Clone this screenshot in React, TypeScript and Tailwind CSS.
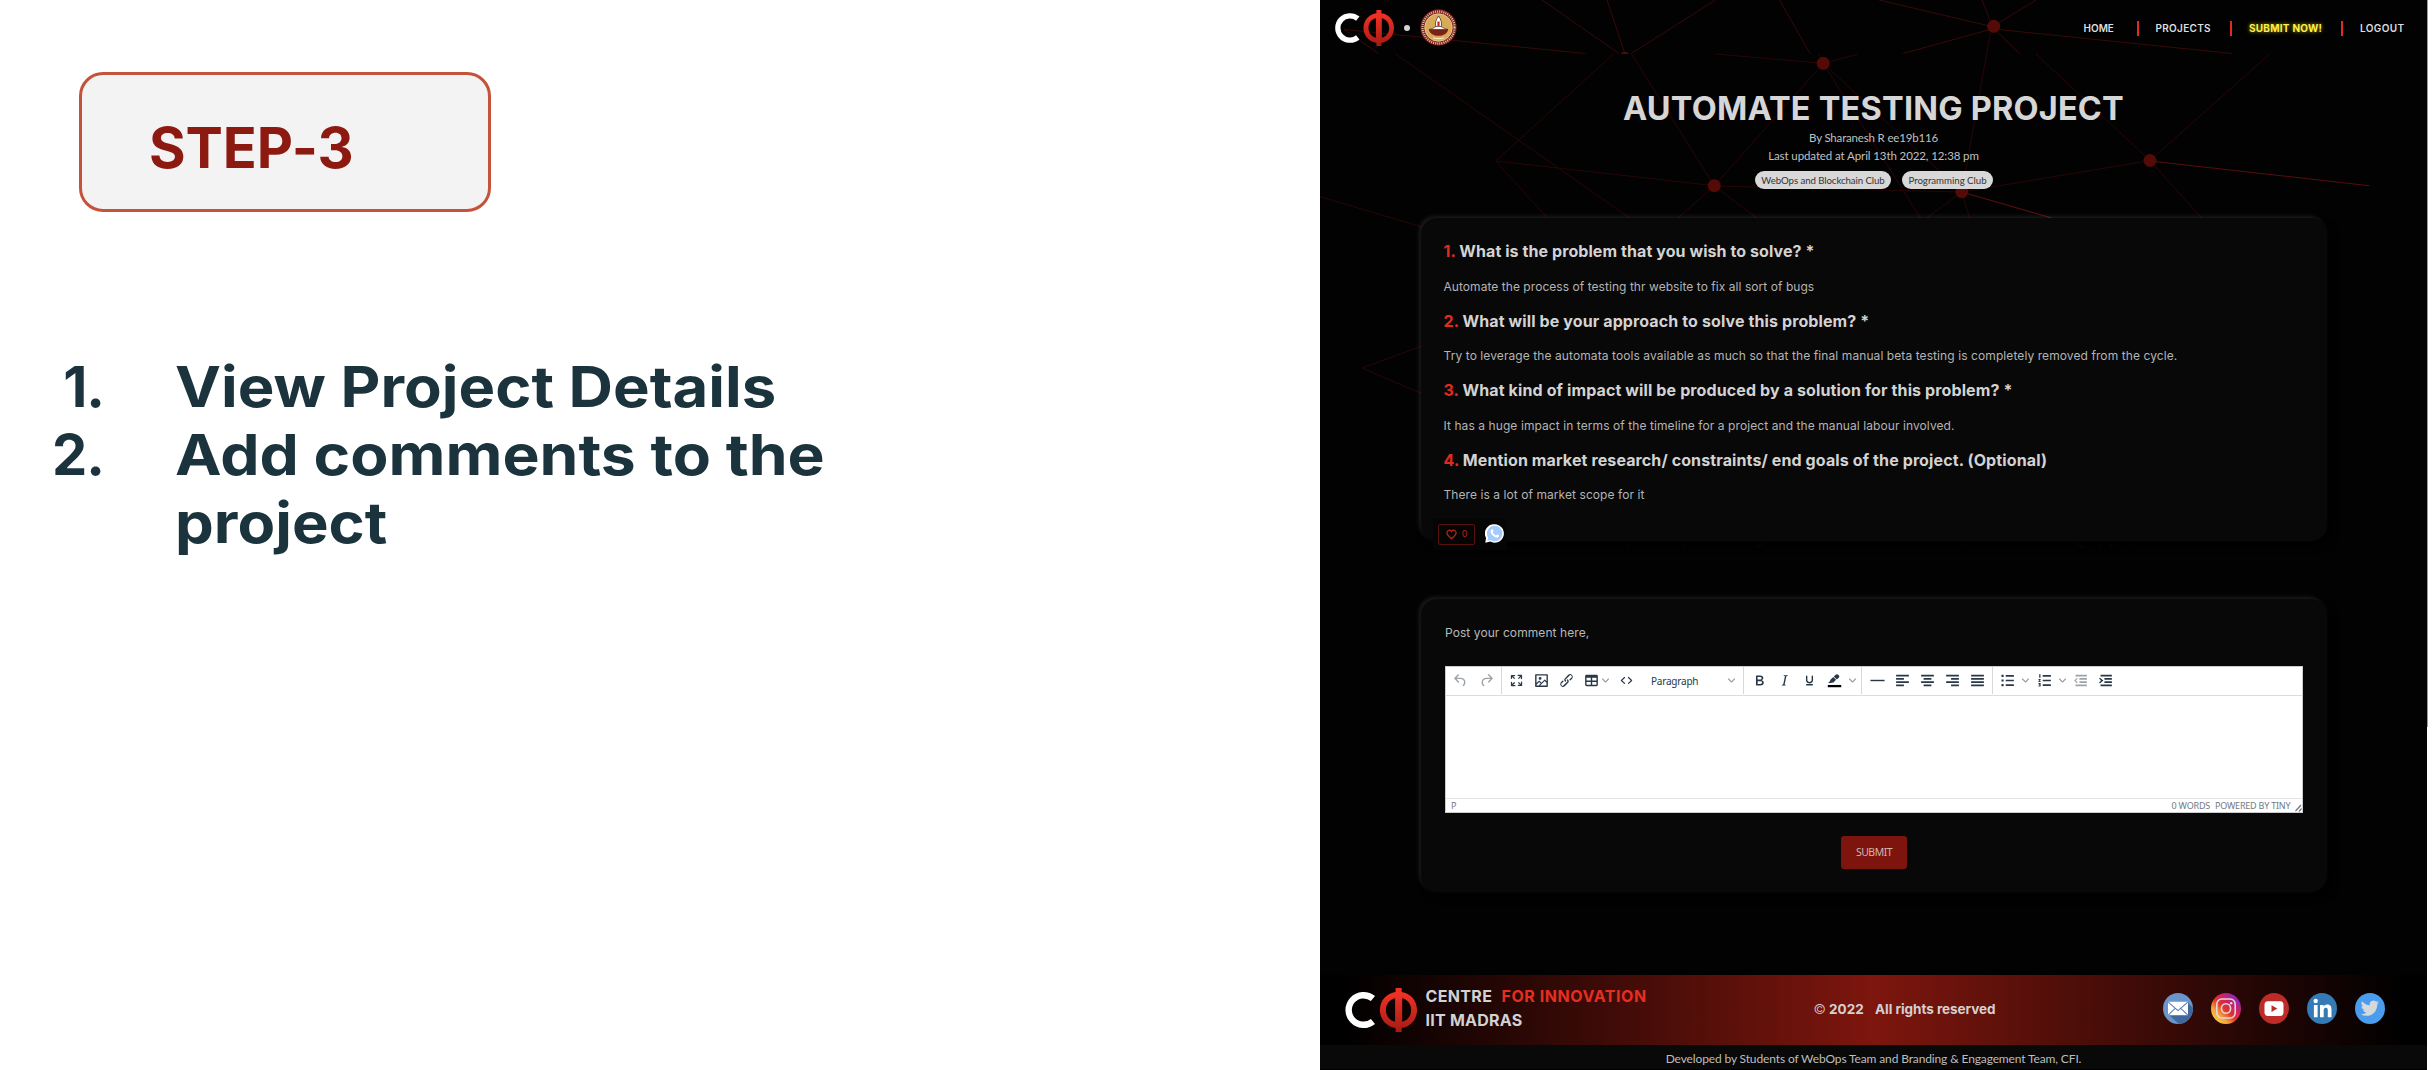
import type { ReactNode } from "react";

/* ---------- logos ---------- */

function CfiLogo({ className, id }: { className: string; id: string }) {
  return (
    <svg className={className} viewBox="0 0 60 36" fill="none">
      <defs>
        <linearGradient id={id} x1="0" y1="0" x2="0" y2="1">
          <stop offset="0.15" stopColor="#ee3124" />
          <stop offset="1" stopColor="#a51a14" />
        </linearGradient>
      </defs>
      <path d="M23.8 8.6A12.2 12.2 0 1 0 23.8 27.4" stroke="#fff" strokeWidth="5.3" />
      <path
        fill={`url(#${id})`}
        fillRule="evenodd"
        d="M42.4 0h5v3.2C54.500 4.200 60 10 60 18s-5.500 13.800-12.600 14.800V36h-5v-3.200C35.300 31.800 29.500 26 29.500 18S35.300 4.200 42.400 3.200zM42 8.300C37.500 9.300 34.500 13 34.500 18s3 8.700 7.500 9.700zM47.800 8.300v19.400C52.200 26.700 55.200 23 55.200 18s-3-8.700-7.400-9.700z"
      />
    </svg>
  );
}

function Seal() {
  return (
    <svg className="h-[37px] w-[37px]" viewBox="0 0 37 37">
      <circle cx="18.500" cy="18.500" r="18.200" fill="#7d1c18" />
      <circle cx="18.500" cy="18.500" r="16" fill="none" stroke="#d9b9a6" strokeWidth="2.300" strokeDasharray="1.100 1" />
      <circle cx="18.500" cy="18.500" r="13.800" fill="#d9ab58" stroke="#f1dcae" strokeWidth="0.700" />
      <path d="M18.500 7c2.600 3.600 3.700 7 2.700 11h-5.400c-1-4 .1-7.400 2.700-11z" fill="#fff" stroke="#3a1a12" strokeWidth="0.700" />
      <path d="M17.400 12.500h2.200v4.500h-2.200z" fill="#c3281c" />
      <path d="M9 20.500c3-.8 5.500-1.800 7-3h5c1.500 1.200 4 2.200 7 3z" fill="#fff" stroke="#3a1a12" strokeWidth="0.600" />
      <path d="M8.800 20.500h19.400c-1 4-4.500 6.300-9.700 6.300s-8.700-2.300-9.700-6.300z" fill="#7a211a" />
      <path d="M13 28.800c3 1.200 8 1.200 11 0" stroke="#fff3d8" strokeWidth="1" fill="none" />
    </svg>
  );
}

/* ---------- particle network behind the page ---------- */

const headerLines = [
  [222, 0, 299, 53.5], [287, 0, 304.300, 52], [395.400, 0, 311.400, 53.5], [459.600, 0, 490, 53.5],
  [24, 29.5, 265, 53.5], [24, 29.5, 58.600, 53.5], [559, 0, 673.700, 27], [662, 0, 671, 23],
  [716, 0, 673.700, 26], [673.700, 28.5, 583, 53.5], [673.700, 28.5, 699.500, 53.5], [673.700, 29, 912, 53.5],
];
const bodyLines = [
  [75.700, 54, 309.600, 218], [293.600, 54, 175.700, 161], [175.700, 161, 227.500, 218],
  [175.700, 161, 394.300, 185.700], [311.400, 54, 394.300, 185.700], [395.400, 54, 503.200, 63.300],
  [503.200, 63.300, 394.300, 185.700], [503.200, 63.300, 537.500, 54.300], [498.500, 54, 503.200, 63.300],
  [503.200, 63.300, 600.500, 218], [503.200, 63.300, 641.800, 192], [0, 196.700, 102, 227],
  [394.300, 185.700, 358, 218], [394.300, 185.700, 436.400, 218], [394.300, 186, 641.800, 192],
  [671, 30, 641.800, 192], [716, 54, 830, 160.500], [949.600, 54, 830, 160.500], [830, 160.500, 641.800, 192],
  [830, 160.500, 881.500, 218], [641.800, 192, 606.500, 218], [641.800, 192, 649.500, 218],
  [102, 346, 42, 368], [42, 368, 102, 393.700],
  [183, 543, 186, 547], [303, 543, 310, 547], [365, 543, 365, 547], [436, 547, 446, 543],
  [642, 543, 643, 547], [752, 543, 764, 547], [776, 543, 781, 547], [791, 543, 792, 547], [809, 547, 812, 543],
];
const brightLines = [
  [830, 161, 1049.300, 185.700], [641.800, 192, 732, 218],
];
const nodes = [[394.300, 185.700], [503.200, 63.300], [673.700, 26.300], [830, 160.500], [641.800, 191.700]];

function Network() {
  return (
    <svg className="absolute inset-0 h-full w-full" viewBox="0 0 1107 1070" fill="none">
      <g stroke="#350a07" strokeWidth="1">
        {headerLines.map((l, i) => (
          <line key={i} x1={l[0]} y1={l[1]} x2={l[2]} y2={l[3]} />
        ))}
      </g>
      <g stroke="#280605" strokeWidth="1">
        {bodyLines.map((l, i) => (
          <line key={i} x1={l[0]} y1={l[1]} x2={l[2]} y2={l[3]} />
        ))}
      </g>
      <g stroke="#560f0b" strokeWidth="1.100">
        {brightLines.map((l, i) => (
          <line key={i} x1={l[0]} y1={l[1]} x2={l[2]} y2={l[3]} />
        ))}
      </g>
      <path d="M300.500 53.800a4.800 3.200 0 0 1 8.500 0z" fill="#6a0f0a" />
      {nodes.map((n, i) => (
        <circle key={i} cx={n[0]} cy={n[1]} r="6.500" fill="#540b07" />
      ))}
    </svg>
  );
}

/* ---------- editor toolbar icons ---------- */

const icons = {
  undo: "M6.4 8H12c3.700 0 6.200 2 6.800 5.100.6 2.700-.4 5.600-2.300 6.800a1 1 0 0 1-1-1.800c1.100-.6 1.800-2.700 1.400-4.600-.5-2.100-2.100-3.500-4.900-3.500H6.400l3.300 3.300a1 1 0 1 1-1.400 1.400l-5-5a1 1 0 0 1 0-1.400l5-5a1 1 0 0 1 1.400 1.400L6.400 8z",
  redo: "M17.600 10H12c-2.800 0-4.400 1.400-4.900 3.500-.4 2 .3 4 1.400 4.600a1 1 0 1 1-1 1.800c-2-1.200-2.900-4.100-2.300-6.800.6-3 3-5.100 6.800-5.100h5.600l-3.300-3.300a1 1 0 1 1 1.400-1.400l5 5a1 1 0 0 1 0 1.400l-5 5a1 1 0 0 1-1.400-1.400l3.300-3.300z",
  fullscreen:
    "M15.300 10l-1.200-1.300 2.900-3h-2.300a.9.9 0 1 1 0-1.700H19c.5 0 .9.4.9.9v4.400a.9.9 0 1 1-1.800 0V7l-2.900 3zm0 4l3 3v-2.300a.9.9 0 1 1 1.700 0V19c0 .5-.4.9-.9.9h-4.400a.9.9 0 1 1 0-1.800H17l-3-2.900 1.300-1.200zM10 15.400l-2.900 3h2.300a.9.9 0 1 1 0 1.700H5a.9.9 0 0 1-.9-.9v-4.400a.9.9 0 1 1 1.800 0V17l2.900-3 1.200 1.300zM8.700 10L5.700 7v2.300a.9.9 0 0 1-1.700 0V5c0-.5.4-.9.9-.9h4.400a.9.9 0 0 1 0 1.800H7l3 2.900-1.300 1.200z",
  image:
    "M5 15.700l3.300-3.200c.3-.3.7-.3 1 0L12 15l4.100-4c.3-.4.8-.4 1 0l2 1.900V5H5v10.700zM5 18v1h3l2.800-2.900-2-2L5 17.900zm14-3l-2.500-2.400-6.400 6.400H19v-4zM4 3h16c.6 0 1 .4 1 1v16c0 .6-.4 1-1 1H4a1 1 0 0 1-1-1V4c0-.6.4-1 1-1zm6 8a2 2 0 1 0 0-4 2 2 0 0 0 0 4z",
  link: "M6.200 12.300a1 1 0 0 1 1.400 1.400l-2.100 2a2 2 0 1 0 2.700 2.800l4.800-4.800a1 1 0 0 0 0-1.400 1 1 0 1 1 1.400-1.300 2.900 2.900 0 0 1 0 4L9.600 20a3.900 3.900 0 0 1-5.500-5.500l2-2zm11.600-.6a1 1 0 0 1-1.400-1.400l2-2a2 2 0 1 0-2.600-2.800L11 10.300a1 1 0 0 0 0 1.400A1 1 0 1 1 9.600 13a2.900 2.900 0 0 1 0-4L14.400 4a3.900 3.900 0 0 1 5.500 5.500l-2 2z",
  table: "M19 4a2 2 0 0 1 2 2v12a2 2 0 0 1-2 2H5a2 2 0 0 1-2-2V6c0-1.100.9-2 2-2h14zM5 14v4h6v-4H5zm14 0h-6v4h6v-4zm0-6h-6v4h6V8zM5 12h6V8H5v4z",
  code: "M9.800 15.700c.3.3.3.8 0 1-.3.4-.9.4-1.200 0l-4.400-4.100a.8.8 0 0 1 0-1.200l4.400-4.200c.3-.3.9-.3 1.200 0 .3.3.3.8 0 1.100L6 12l3.800 3.700zM14.200 15.700c-.3.3-.3.8 0 1 .4.4.9.4 1.200 0l4.400-4.100c.3-.3.3-.9 0-1.200l-4.400-4.200a.8.8 0 0 0-1.200 0c-.3.3-.3.8 0 1.100L18 12l-3.800 3.700z",
  bold: "M7.800 19c-.3 0-.5 0-.6-.2l-.2-.5V5.700c0-.2 0-.4.2-.5l.6-.2h5c1.500 0 2.700.3 3.500 1 .7.6 1.100 1.400 1.100 2.500a3 3 0 0 1-.6 1.900c-.4.6-1 1-1.600 1.200.4.1.9.3 1.300.6s.8.7 1 1.200c.4.4.5 1 .5 1.600 0 1.300-.4 2.300-1.300 3-.8.7-2.100 1-3.800 1H7.800zm5-8.300c.6 0 1.200-.1 1.600-.5.4-.3.6-.7.6-1.300 0-1.100-.8-1.700-2.300-1.700H9.300v3.500h3.400zm.5 6c.7 0 1.300-.1 1.700-.4.4-.4.6-.9.6-1.500s-.2-1-.7-1.400c-.4-.3-1-.4-2-.4H9.400v3.800h4z",
  italic: "M16.700 4.700l-.1.9h-.3c-.6 0-1 0-1.400.3-.3.3-.4.6-.5 1.100l-2.100 9.800v.6c0 .5.4.8 1.400.8h.2l-.2.8H8l.2-.8h.2c1.100 0 1.800-.5 2-1.500l2-9.800.1-.5c0-.6-.4-.8-1.400-.8h-.3l.2-.9h5.800z",
  underline: "M16 5c.6 0 1 .4 1 1v5.500a4 4 0 0 1-.4 1.800l-1 1.400a5.300 5.300 0 0 1-5.500 1 5 5 0 0 1-1.600-1c-.5-.4-.8-.9-1.100-1.400a4 4 0 0 1-.4-1.800V6c0-.6.4-1 1-1s1 .4 1 1v5.500c0 .3 0 .6.2 1l.6.7a3.300 3.300 0 0 0 2.200.8 3.400 3.400 0 0 0 2.200-.8c.3-.2.4-.5.6-.8l.2-.9V6c0-.6.4-1 1-1zM8 17h8c.6 0 1 .4 1 1s-.4 1-1 1H8a1 1 0 0 1 0-2z",
  pen: "M7.700 15.700H3l3.300-3.300-.7-.8L10.200 7l4 4.100-4 4.200c-.2.200-.6.200-.8 0l-.6-.7-1.100 1.100zM11 6.400l3.200-2.700a2 2 0 0 1 2.600 0L18.300 5c.7.700.7 2 0 2.700L15.300 10.700z",
  hr: "M2 11h20v2H2z",
  left: "M3 4h18v2.400H3zm0 4.600h11V11H3zm0 4.600h18v2.400H3zm0 4.600h11v2.400H3z",
  center: "M3 4h18v2.400H3zm3.500 4.600h11V11h-11zM3 13.200h18v2.400H3zm3.500 4.600h11v2.400h-11z",
  right: "M3 4h18v2.400H3zm7 4.600h11V11H10zM3 13.200h18v2.400H3zm7 4.600h11v2.400H10z",
  justify: "M3 4h18v2.400H3zm0 4.600h18V11H3zm0 4.600h18v2.400H3zm0 4.600h18v2.400H3z",
  bullets: "M9.500 4.300H21v2.400H9.500zm0 6.500H21v2.400H9.500zm0 6.500H21v2.400H9.500zM3.500 4h3v3h-3zm0 6.500h3v3h-3zm0 6.500h3v3h-3z",
  numbers: "M9.500 4.300H21v2.400H9.500zm0 6.500H21v2.400H9.500zm0 6.500H21v2.400H9.500zM4.500 3h1.800v5H4.500zM3.500 10h3v1.300l-1.500 1.500h1.500V14h-3v-1.300L5 11.200H3.500zm0 5.700h3v4.600h-3v-1.200H5v-.7H4v-1h1v-.6H3.500z",
  outdent: "M5 4h16v2.400H5zm5.500 4.600H21V11H10.500zm0 4.600H21v2.400H10.500zM5 17.800h16v2.400H5zM7 8.300l1.100 1.100L5.400 12.100l2.700 2.700L7 16 3 12.100z",
  indent: "M5 4h16v2.400H5zm5.500 4.600H21V11H10.500zm0 4.600H21v2.400H10.500zM5 17.800h16v2.400H5zM4 8L3 9.100l2.500 3L3 15.100 4 16.200l5-4.100z",
};

function Ico({ name, dim }: { name: keyof typeof icons; dim?: boolean }) {
  return (
    <svg className={dim ? "h-[17px] w-[17px] shrink-0 text-[#9da2a9]" : "h-[17px] w-[17px] shrink-0 text-[#2a3747]"} viewBox="0 0 24 24" fill="currentColor" fillRule="evenodd">
      <path d={icons[name]} />
      {name === "pen" && <path d="M2.500 18.300h19v3.200h-19z" fill="#000" />}
    </svg>
  );
}

function Chevron() {
  return (
    <svg className="h-[7px] w-[7px] shrink-0 text-[#969ba3]" viewBox="0 0 10 10" fill="currentColor">
      <path d="M8.700 2.200c.3-.3.8-.3 1 0 .4.4.4.9 0 1.200L5.700 7.800c-.3.3-.9.3-1.200 0L.2 3.400a.8.8 0 0 1 0-1.200c.3-.3.8-.3 1.100 0L5 6l3.700-3.800z" />
    </svg>
  );
}

function Toolbar() {
  return (
    <div className="flex h-[29px] items-stretch border-b border-[#dcdcdc] pb-px">
      <div className="flex w-[56px] items-center gap-[9px] border-r border-[#d8d8d8] pl-[6px]">
        <Ico name="undo" dim />
        <Ico name="redo" dim />
      </div>
      <div className="flex w-[242px] items-center border-r border-[#d8d8d8] pl-[6px]">
        <Ico name="fullscreen" />
        <span className="w-[8px]" />
        <Ico name="image" />
        <span className="w-[8px]" />
        <Ico name="link" />
        <span className="w-[8px]" />
        <Ico name="table" />
        <span className="w-[2px]" />
        <Chevron />
        <span className="w-[9px]" />
        <Ico name="code" />
        <span className="ml-[16px] w-[48px] whitespace-nowrap text-[10px] leading-[14px] tracking-[-0.21px] text-[#2a3747]">Paragraph</span>
        <span className="w-[29px]" />
        <Chevron />
      </div>
      <div className="flex w-[118px] items-center border-r border-[#d8d8d8] pl-[7px]">
        <Ico name="bold" />
        <span className="w-[8px]" />
        <Ico name="italic" />
        <span className="w-[8px]" />
        <Ico name="underline" />
        <span className="w-[7.500px]" />
        <Ico name="pen" />
        <span className="w-[6px]" />
        <Chevron />
      </div>
      <div className="flex w-[130.500px] items-center gap-[8px] border-r border-[#d8d8d8] pl-[6.500px]">
        <Ico name="hr" />
        <Ico name="left" />
        <Ico name="center" />
        <Ico name="right" />
        <Ico name="justify" />
      </div>
      <div className="flex items-center pl-[6.500px]">
        <Ico name="bullets" />
        <span className="w-[6px]" />
        <Chevron />
        <span className="w-[6.500px]" />
        <Ico name="numbers" />
        <span className="w-[6px]" />
        <Chevron />
        <span className="w-[6.500px]" />
        <Ico name="outdent" dim />
        <span className="w-[8px]" />
        <Ico name="indent" />
      </div>
    </div>
  );
}

/* ---------- page parts ---------- */

const NavBar = () => (
  <span className="h-[15px] w-[2px] bg-[#e32b1f]" />
);

function Header() {
  return (
    <header className="flex h-[54px] items-start">
      <CfiLogo id="phi-top" className="ml-[14px] mt-[10px] h-[36px] w-[60px]" />
      <span className="ml-[10px] mt-[25px] h-[6px] w-[6px] rounded-full bg-[#d4d4d4]" />
      <span className="ml-[10px] mt-[9px]">
        <Seal />
      </span>
      <nav className="ml-auto mt-[20px] flex h-[16px] items-center pr-[22px] font-['Inter',sans-serif] text-[10px] font-semibold leading-[16px] text-[#dedede]">
        <span className="w-[53px]">HOME</span>
        <NavBar />
        <span className="ml-[17px] w-[74.500px] tracking-[0.3px]">PROJECTS</span>
        <NavBar />
        <span className="ml-[17px] w-[92px] whitespace-nowrap font-bold tracking-[0.25px] text-[#fdf04a] [text-shadow:0_0_4px_#b8a800]">SUBMIT NOW!</span>
        <NavBar />
        <span className="ml-[17px] w-[45px] tracking-[0.4px]">LOGOUT</span>
      </nav>
    </header>
  );
}

function Question({ n, title, body, tt, bt }: { n: string; title: string; body: string; tt: string; bt: string }) {
  return (
    <div className="h-[69.67px] whitespace-nowrap font-['Inter',sans-serif]">
      <h2 className={"text-[16px] font-bold leading-6 text-[#d3d3d3] " + tt}>
        <span className="text-[#e02c20]">{n}</span> {title}
      </h2>
      <p className={"mt-[13.500px] text-[12px] leading-5 text-[#b4b4b4] " + bt}>{body}</p>
    </div>
  );
}

function Card({ className, children }: { className: string; children: ReactNode }) {
  return (
    <section
      className={
        "ml-[101px] w-[906px] rounded-[16px] bg-[#080808] shadow-[-2px_-2px_4px_rgba(255,255,255,0.11),5px_5px_7px_#000] " + className
      }
    >
      {children}
    </section>
  );
}

function Socials() {
  return (
    <div className="flex gap-[18px]">
      <svg className="h-[31px] w-[30px]" viewBox="0 0 30 30" preserveAspectRatio="none">
        <circle cx="15" cy="15" r="15" fill="#6b96cc" />
        <path d="M25 9.500l4.800 5A15 15 0 0 1 16 30L5.500 21z" fill="#3f689f" />
        <path d="M5 8.500h20v13H5z" fill="#fff" />
        <path d="M5.200 8.800L15 17l9.800-8.200M5.200 21.300l7-6.500M24.800 21.300l-7-6.500" stroke="#5279b4" strokeWidth="1" fill="none" />
      </svg>
      <svg className="h-[31px] w-[30px]" viewBox="0 0 30 30" preserveAspectRatio="none">
        <defs>
          <linearGradient id="ig" x1="0.100" y1="0.900" x2="0.850" y2="0.100">
            <stop offset="0" stopColor="#fbd24a" />
            <stop offset="0.250" stopColor="#f8a03a" />
            <stop offset="0.480" stopColor="#e2342b" />
            <stop offset="0.700" stopColor="#cf2463" />
            <stop offset="1" stopColor="#8a24c8" />
          </linearGradient>
        </defs>
        <circle cx="15" cy="15" r="15" fill="url(#ig)" />
        <g stroke="#dfd9d9" strokeWidth="1.600" fill="none">
          <rect x="5.800" y="5.800" width="18.400" height="18.400" rx="5" />
          <circle cx="15" cy="15" r="4.600" />
        </g>
        <circle cx="20.200" cy="9.800" r="1.200" fill="#e8e2e2" />
      </svg>
      <svg className="h-[31px] w-[30px]" viewBox="0 0 30 30" preserveAspectRatio="none">
        <circle cx="15" cy="15" r="15" fill="#bd2c28" />
        <rect x="5.500" y="8" width="19" height="14.200" rx="3.500" fill="#fff" />
        <path d="M12.500 11.800v6.600l5.800-3.300z" fill="#bd2c28" />
      </svg>
      <svg className="h-[31px] w-[30px]" viewBox="0 0 30 30" preserveAspectRatio="none">
        <circle cx="15" cy="15" r="15" fill="#347ab6" />
        <circle cx="8.700" cy="7.800" r="2.200" fill="#fff" />
        <path d="M6.900 11.500h3.700v12H6.900zM13 11.500h3.500v1.700c.7-1.200 2-2 3.800-2 3.400 0 4.200 2.200 4.200 5.200v7.100h-3.700v-6.300c0-1.600-.1-3-1.900-3s-2.200 1.300-2.200 2.900v6.400H13z" fill="#fff" />
      </svg>
      <svg className="h-[31px] w-[30px]" viewBox="0 0 30 30" preserveAspectRatio="none">
        <circle cx="15" cy="15" r="15" fill="#4a9cec" />
        <path
          transform="translate(5.800 5.600) scale(0.760)"
          d="M23.950 4.570a10 10 0 0 1-2.820.78 4.960 4.960 0 0 0 2.160-2.720 9.900 9.900 0 0 1-3.120 1.190 4.920 4.920 0 0 0-8.380 4.480C7.690 8.100 4.070 6.130 1.640 3.160a4.920 4.920 0 0 0 1.520 6.570 4.900 4.900 0 0 1-2.230-.61v.06a4.920 4.920 0 0 0 3.950 4.830 5 5 0 0 1-2.210.08 4.940 4.940 0 0 0 4.600 3.420A9.870 9.870 0 0 1 0 19.540a14 14 0 0 0 7.550 2.210c9.050 0 14-7.500 14-13.980 0-.21 0-.42-.02-.63a9.940 9.940 0 0 0 2.460-2.550z"
          fill="#d6d9dc"
        />
      </svg>
    </div>
  );
}

function SitePage() {
  return (
    <main className="relative h-full w-[1107px] overflow-hidden bg-[#020202] font-['Lato',sans-serif]">
      <Network />
      <div className="relative flex h-full flex-col">
        <Header />

        <div className="mt-[34px] flex flex-col items-center whitespace-nowrap">
          <h1 className="font-['Inter',sans-serif] text-[32.500px] font-bold leading-[41px] tracking-[0.2px] text-[#d6d6d6]">AUTOMATE TESTING PROJECT</h1>
          <p className="text-[11.500px] leading-[18px] tracking-[-0.17px] text-[#c0c0c0]">By Sharanesh R ee19b116</p>
          <p className="text-[11.500px] leading-[18px] tracking-[-0.1px] text-[#c0c0c0]">Last updated at April 13th 2022, 12:38 pm</p>
          <div className="ml-px mt-[6px] flex gap-[11.500px] text-[9.700px] leading-[18px] text-[#333]">
            <span className="h-[18px] w-[135.500px] rounded-full bg-[#d8d8d8] text-center tracking-[-0.09px]">WebOps and Blockchain Club</span>
            <span className="h-[18px] w-[90.500px] rounded-full bg-[#d8d8d8] text-center tracking-[-0.03px]">Programming Club</span>
          </div>
        </div>

        <Card className="mt-[29px] h-[323px] shrink-0 pl-[22.500px] pt-[21px]">
          <Question n="1." title="What is the problem that you wish to solve? *" body="Automate the process of testing thr website to fix all sort of bugs" tt="tracking-[0.08px]" bt="tracking-[0.051px]" />
          <Question n="2." title="What will be your approach to solve this problem? *" body="Try to leverage the automata tools available as much so that the final manual beta testing is completely removed from the cycle." tt="tracking-[0.11px]" bt="tracking-[0.086px]" />
          <Question n="3." title="What kind of impact will be produced by a solution for this problem? *" body="It has a huge impact in terms of the timeline for a project and the manual labour involved." tt="tracking-[0.12px]" bt="tracking-[0.08px]" />
          <Question n="4." title="Mention market research/ constraints/ end goals of the project. (Optional)" body="There is a lot of market scope for it" tt="tracking-[0.115px]" bt="tracking-[0.07px]" />
          <div className="ml-[-10.500px] mt-px flex h-[31px] w-[74px] items-start bg-[#050505] pl-[5px] pt-[5px]">
            <button className="flex h-[21px] w-[37px] items-center rounded-[2px] border border-[#5a120c] pl-[7px]">
              <svg className="h-[11px] w-[11px]" viewBox="0 0 24 24" fill="none" stroke="#b3241a" strokeWidth="2.800">
                <path d="M12 21C7 17 2 13 2 8a5.300 5.300 0 0 1 10-2.400A5.300 5.300 0 0 1 22 8c0 5-5 9-10 13z" />
              </svg>
              <span className="ml-[5px] text-[9px] leading-[12px] text-[#b8281d]">0</span>
            </button>
            <svg className="ml-[10px] h-[19px] w-[19px]" viewBox="0 0 20 20">
              <path d="M10.200.3a9.700 9.700 0 1 1-4.700 18.200L.3 19.700l.8-5A9.700 9.700 0 0 1 10.200.3z" fill="#fff" />
              <path d="M10.200 1.900a8.100 8.100 0 1 1-4.400 14.900L2.500 17.700l.9-3.300a8.100 8.100 0 0 1 6.800-12.500z" fill="#a3cbff" />
              <path d="M7.400 5.500c.4-.1.600 0 .8.400l.7 1.600c.1.300 0 .6-.7 1.400.9 1.600 2 2.500 3.500 3.100.6-.8.900-1.100 1.300-.9l1.600.8c.4.2.3.600.1 1.200-.4.900-1.500 1.300-2.400 1.200-3.300-.6-6-3.300-6.500-6.300 0-1.100.8-2.400 1.600-2.500z" fill="#fff" />
            </svg>
          </div>
        </Card>

        <Card className="mt-[58px] h-[293px] shrink-0 pl-[24px] pt-[23.500px]">
          <p className="font-['Inter',sans-serif] text-[12px] leading-5 tracking-[0.08px] text-[#b8b8b8]">Post your comment here,</p>
          <div className="mt-[23.500px] flex h-[147px] w-[858px] flex-col border border-[#ccc] bg-white font-['Noto_Sans',sans-serif]">
            <Toolbar />
            <div className="flex-1" />
            <div className="flex h-[14px] items-center border-t border-[#e4e4e4] pl-[5px] text-[9px] leading-[12px] text-[#717986]">
              <span>P</span>
              <span className="ml-auto w-[43.500px] tracking-[-0.2px]">0 WORDS</span>
              <span className="w-[80px] whitespace-nowrap tracking-[-0.216px]">POWERED BY TINY</span>
              <svg className="mt-[4px] h-[8px] w-[7px]" viewBox="0 0 7 8" stroke="#6b7280" strokeWidth="1.200">
                <path d="M0.500 7L6 1M4 7.500L6.500 4.500" />
              </svg>
            </div>
          </div>
          <button className="ml-[396px] mt-[23px] h-[33px] w-[66px] rounded-[3px] bg-[#7d150e] pb-[2px] text-center font-['Noto_Sans',sans-serif] text-[10.500px] leading-[30px] tracking-[-0.5px] text-[#cfb4b2]">
            SUBMIT
          </button>
        </Card>

        <footer className="mt-auto">
          <div className="flex h-[70.500px] items-start bg-[linear-gradient(90deg,#000_2%,#7d160e_50%,#000_98%)] font-['Inter',sans-serif]">
            <CfiLogo id="phi-foot" className="ml-[24px] mt-[13.500px] h-[44px] w-[73px]" />
            <div className="ml-[8.500px] mt-[10.500px] w-[388px] whitespace-nowrap text-[16px] font-bold leading-[23.700px] text-[#d2d2d2]">
              <div className="flex">
                <span className="w-[76px] tracking-[0.35px]">CENTRE</span>
                <span className="tracking-[0.55px] text-[#e62e21]">FOR INNOVATION</span>
              </div>
              <div className="tracking-[0.25px]">IIT MADRAS</div>
            </div>
            <div className="mt-[24px] flex whitespace-nowrap text-[13.500px] font-bold leading-[20px] text-[#d6d0cf]">
              <span className="w-[61.500px]"><span className="font-light">©</span> 2022</span>
              <span className="tracking-[-0.04px]">All rights reserved</span>
            </div>
            <div className="ml-auto mr-[42px] mt-[18px]">
              <Socials />
            </div>
          </div>
          <p className="h-[25px] border-b border-black bg-[#090909] text-center text-[12px] leading-[27px] tracking-[-0.131px] text-[#bdbdbd]">
            Developed by Students of WebOps Team and Branding &amp; Engagement Team, CFI.
          </p>
        </footer>
      </div>
    </main>
  );
}

function Slide() {
  return (
    <section className="w-[1320px] bg-white pl-[79px] pt-[72px] font-['Inter',sans-serif] font-bold">
      <div className="h-[140px] w-[412px] rounded-[24px] border-[3px] border-[#c5523a] bg-[#f3f3f3] pl-[67px] pt-[37px] text-[56px] leading-[72px] tracking-[-0.1px] text-[#8c1a11]">
        STEP-3
      </div>
      <ol className="ml-[-29px] mt-[140.500px] whitespace-nowrap text-[56px] leading-[68.300px] text-[#1b333d]">
        <li className="flex">
          <span className="w-[54px] text-right tracking-[-1px]">1.</span>
          <span className="ml-[71px] origin-left scale-x-[1.1]">View Project Details</span>
        </li>
        <li className="flex">
          <span className="w-[54px] text-right tracking-[-1px]">2.</span>
          <span className="ml-[71px]">
            <span className="block origin-left scale-x-[1.114]">Add comments to the</span>
            <span className="block origin-left scale-x-[1.1]">project</span>
          </span>
        </li>
      </ol>
    </section>
  );
}

export default function App() {
  return (
    <div className="flex h-[1070px] w-[2432px] overflow-hidden bg-white">
      <Slide />
      <SitePage />
      <div className="h-[727px] w-px bg-[#9a9a9a]" />
    </div>
  );
}
